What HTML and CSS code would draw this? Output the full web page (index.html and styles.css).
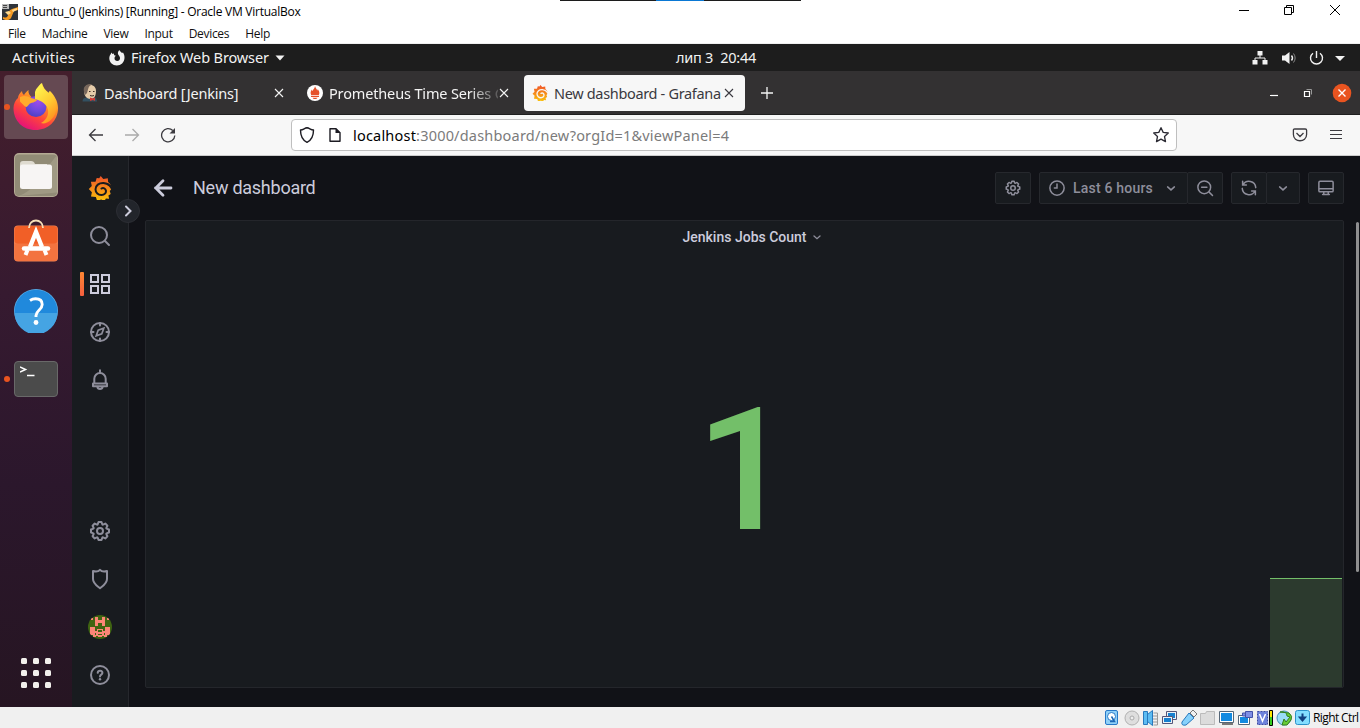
FILE: index.html
```html
<!DOCTYPE html>
<html lang="en">
<head>
<meta charset="utf-8">
<title>Ubuntu_0 (Jenkins) [Running] - Oracle VM VirtualBox</title>
<link rel="stylesheet" href="styles.css">
</head>
<body>
<svg class="defs" width="0" height="0">
  <defs>
    <linearGradient id="graf" x1="0" y1="0" x2="0" y2="1"><stop offset="0" stop-color="#f0522a"/><stop offset="1" stop-color="#fbc40a"/></linearGradient>
    <linearGradient id="fox" x1=".8" y1=".1" x2=".3" y2="1"><stop offset="0" stop-color="#ffd63a"/><stop offset=".35" stop-color="#ff9226"/><stop offset=".65" stop-color="#ff453b"/><stop offset="1" stop-color="#e3107b"/></linearGradient>
    <linearGradient id="flame" x1=".3" y1="0" x2=".8" y2="1"><stop offset="0" stop-color="#fff44f"/><stop offset=".5" stop-color="#ffcb32"/><stop offset="1" stop-color="#ff8a1d"/></linearGradient>
    <radialGradient id="globe" cx=".6" cy=".25" r=".8"><stop offset="0" stop-color="#a04bea"/><stop offset=".6" stop-color="#6a48dc"/><stop offset="1" stop-color="#4a3fc0"/></radialGradient>
    <symbol id="cog" viewBox="0 0 24 24"><path d="M21.32,9.55l-1.89-.63.89-1.78A1,1,0,0,0,20.13,6L18,3.87a1,1,0,0,0-1.15-.19l-1.78.89-.63-1.89A1,1,0,0,0,13.5,2h-3a1,1,0,0,0-.95.68L8.92,4.57,7.14,3.68A1,1,0,0,0,6,3.87L3.87,6a1,1,0,0,0-.19,1.15l.89,1.78-1.89.63A1,1,0,0,0,2,10.5v3a1,1,0,0,0,.68.95l1.89.63-.89,1.78A1,1,0,0,0,3.87,18L6,20.13a1,1,0,0,0,1.15.19l1.78-.89.63,1.89a1,1,0,0,0,.95.68h3a1,1,0,0,0,.95-.68l.63-1.89,1.78.89A1,1,0,0,0,18,20.13L20.13,18a1,1,0,0,0,.19-1.15l-.89-1.78,1.89-.63A1,1,0,0,0,22,13.5v-3A1,1,0,0,0,21.32,9.55ZM20,12.78l-1.2.4A2,2,0,0,0,17.64,16l.57,1.14-1.1,1.1L16,17.64a2,2,0,0,0-2.79,1.16l-.4,1.2H11.22l-.4-1.2A2,2,0,0,0,8,17.64l-1.14.57-1.1-1.1L6.36,16A2,2,0,0,0,5.2,13.18L4,12.78V11.22l1.2-.4A2,2,0,0,0,6.36,8L5.79,6.89l1.1-1.1L8,6.36A2,2,0,0,0,10.82,5.2l.4-1.2h1.56l.4,1.2A2,2,0,0,0,16,6.36l1.14-.57,1.1,1.1L17.64,8a2,2,0,0,0,1.16,2.79l1.2.4ZM12,8a4,4,0,1,0,4,4A4,4,0,0,0,12,8Zm0,6a2,2,0,1,1,2-2A2,2,0,0,1,12,14Z" fill="currentColor"/></symbol>
    <symbol id="chev" viewBox="0 0 24 24"><path d="M7.500 10.500l4.500 4 4.500-4" class="ln"/></symbol>
    <symbol id="cross" viewBox="0 0 12 12"><path d="M2 2l8 8M10 2l-8 8" fill="none" stroke="currentColor" stroke-width="1.1"/></symbol>
    <symbol id="gear-spiral" viewBox="0 0 24 24">
      <path fill="url(#graf)" d="M12.700 0l2.600 3 4.500-.8.3 3.800c2 1.600 3.500 4 3.800 6.800l-2.200 2.200 1 3-2.300 1.500.7 3.200-3.200-.1-1.500 2.400-3.200-1.500-4.100 1.300-1.200-3.700-4.900-.6.900-4.200-3.100-3.300 3-2.900-.9-4.400 4.600.1 1.200-3.800 2.500.3z"/>
      <path d="M25 15.500c-1.200-4.500-4.500-8.300-9.500-8.600-4.500-.2-8 2.600-8 6.400 0 3.600 2.800 5.900 6 5.800 3-.1 4.800-2.200 4.400-4.600-.4-2.100-2.600-3.100-4.400-2" fill="none" class="groove" stroke-width="2" stroke-linecap="round"/>
    </symbol>
  </defs>
</svg>

<div class="host">
  <header class="win">
    <span class="taskpeek"></span>
    <div class="title">
      <svg width="16" height="16" viewBox="0 0 16 16"><rect width="16" height="16" fill="#30343a"/><path d="M0 0h7v5H0z" fill="#b9b9b9"/><path d="M1 1.500h4M1 3.500h4" stroke="#444"/><path d="M1 13c5 2 5-2 6-5s3-3 9-5v3l-4 1-3 7c-2 3-6 2-8 1z" fill="#f59a23"/><path d="M3 8l4-1 2 2-3 2z" fill="#ffd98c"/><path d="M10 6l5-2v2l-4 2z" fill="#ffd98c"/></svg>
      <span class="cap">Ubuntu_0 (Jenkins) [Running] - Oracle VM VirtualBox</span>
    </div>
    <svg class="winctl" width="102" height="20" viewBox="0 0 102 20" fill="none" stroke="#000"><path d="M0 10.500h10M45.500 7.500h7v7h-7zM47.500 7.500v-2h7v7h-2M91 5l10 10M101 5l-10 10"/></svg>
  </header>
  <nav class="menu"><span>File</span><span>Machine</span><span>View</span><span>Input</span><span>Devices</span><span>Help</span></nav>

  <div class="top">
    <span class="act">Activities</span>
    <svg class="foxmono" width="16" height="16" viewBox="0 0 16 16"><path d="M1.500 4.500l1-2 1 1.500 1.500-.5C4.800 5 5 5.500 7 5.800 6 6.500 5.500 7 5.500 8.500c0 1.500 1.200 2.500 2.700 2.500 2 0 3-1.500 2.800-3.200C10.800 6 9.500 5.500 9 4 8.500 2.500 9.500 1 10.500 0c.3 1.500 1.500 1.800 2.500 3l1-.5c1 1.500 1.700 3.500 1.500 5.500-.2 4.500-3.500 7.500-7.700 7.500S.5 12.300.3 8.500c0-1.500.4-3 1.200-4z" fill="#f2f2f2"/></svg>
    <span class="app">Firefox Web Browser</span>
    <svg class="tri" width="10" height="6"><path d="M.5.5h9L5 5.500z" fill="#f2f2f2"/></svg>
    <span class="clock">лип 3&nbsp; 20:44</span>
    <svg class="tray" width="94" height="16" viewBox="0 0 94 16" fill="none" stroke="#f2f2f2">
      <path d="M5.500 1h5v4.500h-5zM.5 10h5v4.500h-5zM10.500 10h5v4.500h-5z" fill="#f2f2f2" stroke="none"/><path d="M8 5v3M3 10.500V8h10v2.500"/>
      <path d="M30 5.500h3L37.500 2v12L33 10.500h-3z" fill="#f2f2f2" stroke="none"/><path d="M39.500 5.500q2 2.500 0 5" stroke-width="1.400"/><path d="M41.500 3.500q3.300 4.500 0 9" stroke="#888"/>
      <path d="M61 3.200a6 6 0 1 0 7 0M64.500 1v7" stroke-width="1.400"/><path d="M83 6h10L88 11z" fill="#f2f2f2" stroke="none"/>
    </svg>
  </div>

  <div class="desktop">
    <aside class="dock">
      <div class="slot on"><i class="dot"></i>
        <svg width="46" height="48" viewBox="0 0 46 48"><path d="M5 15c0-3 2-5 4-7 0 2 1 3 2 4 1-2 3-4 4.500-5-.5 3 1 5 3 7l5 2V8c1-3 3-5 5.500-8 1 4 3 7 7 10l1-2c4 4 8 10 8 17 0 13-10 22-22.500 22S.5 38 .5 25c0-4 2-8 4.500-10z" fill="url(#fox)"/><circle cx="23" cy="23.500" r="10.500" fill="url(#globe)"/><path d="M22 9c1-4 4-6 6.500-9 1 4 3 7 7 10l1-2c7 7 8 15 6.500 20-2 9-10 14-15 12 6-3 9-10 6-16-3-5-8-7-12-8z" fill="url(#flame)"/><path d="M7 14c4-2 8-1 11 1l6 1.500c0 3-7 3-8 5-2 2-2 3-4 2l-5-5z" fill="#ffab2b"/></svg>
      </div>
      <div class="slot">
        <svg width="44" height="44" viewBox="0 0 44 44"><rect width="44" height="44" rx="5" fill="#b4aa94"/><rect x="1" y="1.500" width="42" height="41.500" rx="4" fill="#918b76"/><path d="M43 1.500v38L4 43c14-4 18-14 39-41z" fill="#a09a84"/><path d="M6 11q0-3 3-3h8q3 0 4 3l12 0v8H6z" fill="#dfdbd0"/><rect x="6" y="11.500" width="32" height="24.500" rx="2.500" fill="#f7f5f4"/></svg>
      </div>
      <div class="slot bag">
        <svg width="46" height="46" viewBox="0 0 46 46"><rect x="1" y="8.500" width="44" height="36" rx="4" fill="#f08354"/><rect x="1.500" y="9" width="43" height="18" rx="4" fill="#f15f27"/><path d="M1.500 26.500h43V41q0 3-3 3h-37q-3 0-3-3z" fill="#f3733f"/><path d="M16 11c0-10 14-10 14 0" fill="none" stroke="#f5dfb8" stroke-width="1.800"/><g fill="none" stroke="#fff"><path d="M17 30l6-15 6 15" stroke-width="4.400"/><path d="M11 31.500h24" stroke-width="4.500" stroke-linecap="round"/><path d="M14.500 33l-2 5M31.500 33l2 5" stroke-width="4"/></g></svg>
      </div>
      <div class="slot">
        <svg width="44" height="44" viewBox="0 0 44 44"><circle cx="22" cy="22" r="22" fill="#5aaee8"/><circle cx="22" cy="22" r="21.300" fill="#2089dc"/><path d="M.7 24h42.600a21.300 21.300 0 0 1-42.600 0z" fill="#45a4e3"/><path d="M16 11.500c1.500-1 3.500-1.700 5.500-1.700 4 0 6.700 2 6.700 5.700 0 5.500-6.200 6-6.200 11v1.500" fill="none" stroke="#fff" stroke-width="2.900"/><circle cx="22" cy="33.500" r="2.400" fill="#fff"/></svg>
      </div>
      <div class="slot"><i class="dot"></i>
        <div class="term"><svg width="18" height="12" viewBox="0 0 18 12"><path d="M0 1l5.500 2.500L0 6M7 9.500h7.500" fill="none" stroke="#fff" stroke-width="1.500"/></svg></div>
      </div>
      <div class="apps"><i></i><i></i><i></i><i></i><i></i><i></i><i></i><i></i><i></i></div>
    </aside>

    <main class="browser">
      <div class="tabs">
        <div class="tab t1">
          <svg width="16" height="18" viewBox="0 0 16 18"><path d="M.5 17.500q0-4 4.500-4l7-1q2.500 1 3 5z" fill="#335061"/><path d="M2 7C2-1.500 14-1 14 7c0 5-2 8-5.500 8S2 12 2 7z" fill="#e5cba9"/><path d="M3 11C-.5 3 4-.5 10 .5 6 2 6.500 5 5 9z" fill="#77675b"/><path d="M7 7.500h1.500M11 7.500h1.500M8 11.500q2 1 4 0" stroke="#3b2b25" fill="none"/><path d="M8 13.500l3 1 2-1v3.500l-2-1-3 1z" fill="#d33833"/></svg>
          <span class="tx">Dashboard [Jenkins]</span><svg class="x" width="12" height="12"><use href="#cross"/></svg>
        </div>
        <div class="tab t2">
          <svg width="16" height="16" viewBox="0 0 16 16"><circle cx="8" cy="8" r="8" fill="#fff"/><path d="M8 1c.3 2 2 3 2.200 4.500.5-.5.6-1 .6-1.500 1 1.500 1.800 3 1.500 4.500l-.5 1.500H4.200L3.700 8.500c-.3-1.500.5-3 1.300-4 0 .8.200 1.200.7 1.500C6 4 8 3.500 8 1zM4 10.800h8V12H4zM5.500 12.700h5c-.5 1.700-4.500 1.700-5 0z" fill="#e6522c"/></svg>
          <span class="tx fade">Prometheus Time Series C</span><svg class="x" width="12" height="12"><use href="#cross"/></svg>
        </div>
        <div class="tab t3">
          <svg width="16" height="16"><use href="#gear-spiral"/></svg>
          <span class="tx">New dashboard - Grafana</span><svg class="x" width="12" height="12"><use href="#cross"/></svg>
        </div>
        <svg class="plus" width="12" height="12" viewBox="0 0 12 12"><path d="M6 0v12M0 6h12" stroke="#f4f4f4" stroke-width="1.300"/></svg>
        <svg class="gtk" width="84" height="20" viewBox="0 0 84 20" fill="none" stroke="#fff"><path d="M1 12.500h8" stroke-width="1.200"/><path d="M37.500 6.500h5v5" stroke="#999"/><path d="M35.500 8.500h5v5h-5z" stroke-width="1.200"/><circle cx="73" cy="10" r="9.300" fill="#e95420" stroke="none"/><path d="M69.500 6.500l7 7M76.500 6.500l-7 7" stroke-width="1.400"/></svg>
      </div>

      <div class="bar">
        <svg class="nav" width="88" height="16" viewBox="0 0 88 16" fill="none" stroke="#3c3b40" stroke-width="1.300"><path d="M15 8H1.500M7.500 2L1.500 8l6 6"/><path d="M37 8h13.500M44.500 2l6 6-6 6" stroke="#ababab"/><path d="M86.800 8.500a6.600 6.600 0 1 1-2-5"/><path d="M87 1v5.500h-5.500z" fill="#3c3b40" stroke="none"/></svg>
        <div class="url">
          <svg width="44" height="18" viewBox="0 0 44 18" fill="none" stroke="#1c1b22" stroke-width="1.400"><path d="M8 1.700C5.500 2 4.500 3.800 1.500 4c0 6 1.500 10 6.500 12.300 5-2.300 6.500-6.300 6.500-12.300-3-.2-4-2-6.500-2.300z" stroke-linejoin="round"/><path d="M31 2.700h6l4 4v8.600h-10z" stroke-linejoin="round"/><path d="M36.500 2v5h5z" fill="#1c1b22" stroke="none"/></svg>
          <span class="addr"><b>localhost</b>:3000/dashboard/new?orgId=1&amp;viewPanel=4</span>
          <svg class="star" width="18" height="18" viewBox="0 0 18 18"><path d="M9 1.700l2.200 4.700 5.100.6-3.800 3.500 1 5.100L9 13.100l-4.500 2.500 1-5.100L1.700 7l5.100-.6z" fill="none" stroke="#2b2a33" stroke-width="1.300" stroke-linejoin="round"/></svg>
        </div>
        <svg class="ff" width="50" height="16" viewBox="0 0 50 16" fill="none" stroke="#3c3b40" stroke-width="1.300"><path d="M2.700 2h10.600q1.300 0 1.300 1.300V7.500c0 8.300-13.200 8.300-13.200 0V3.300Q1.400 2 2.700 2zM4.500 6L8 9.500 11.500 6"/><path d="M38 3.500h12M38 7.500h12M38 11.500h12" stroke-width="1.200"/></svg>
      </div>

      <div class="grafana">
        <nav class="side">
          <svg class="logo" width="24" height="24"><use href="#gear-spiral"/></svg>
          <svg width="24" height="24"><g class="ln"><circle cx="11" cy="11" r="8"/><path d="M17 17l4 4"/></g></svg>
          <div class="active"><svg width="24" height="24"><path class="ln" d="M3 3h7v7H3zM14 3h7v7h-7zM3 14h7v7H3zM14 14h7v7h-7z"/></svg></div>
          <svg width="24" height="24"><g class="ln"><circle cx="12" cy="12" r="9"/><path d="M15.800 8.200l-2 5.600-5.600 2 2-5.600z" stroke-width="1.700"/><path d="M12 3v2.500M12 18.500V21M3 12h2.500M18.500 12H21"/></g></svg>
          <svg width="24" height="24"><g class="ln" stroke-linejoin="round"><path d="M12 2.200V5M6.300 14.500V10.700a5.700 5.700 0 0 1 11.400 0v3.800M5 15.500h14v2.800H5zM9.300 18.500c.5 3.300 4.900 3.300 5.400 0"/></g></svg>
          <span class="sp"></span>
          <svg width="24" height="24"><use href="#cog"/></svg>
          <svg width="24" height="24"><path class="ln" stroke-linejoin="round" d="M12 2.800C10.500 4.500 7.500 4.800 5 4v8c0 4.500 3.500 6.500 7 9.200 3.500-2.700 7-4.700 7-9.200V4c-2.500.8-5.500.5-7-1.200z"/></svg>
          <svg class="avatar" width="24" height="24" shape-rendering="crispEdges"><path d="M0 0h24v24H0z" fill="#3f6412"/><path d="M3 3h2v2H3zM19 3h2v2h-2zM7 2h3v3h4V2h3v9h-3V8h-4v3H7zM2 12h5v2h10v-2h5v8h-3v2h-3v-1h-2v1h-4v-1H8v1H5v-2H2z" fill="#fb8677"/><path d="M10 15h4v2h-4zM10 19h4v1h-4zM7 14h2v2H7zM15 14h2v2h-2zM7 18h1v2H7zM16 18h1v2h-1z" fill="#3f6412"/></svg>
          <svg width="24" height="24"><g class="ln"><circle cx="12" cy="12" r="9"/><path d="M9.700 9.800c.4-2.800 4.700-2.500 4.700.2 0 1.700-2.400 1.600-2.400 3.500"/></g><circle cx="12" cy="16.300" r="1.200" fill="currentColor"/></svg>
          <span class="expand"><svg width="24" height="24" viewBox="0 0 24 24"><path d="M10 7.500l4.500 4.500-4.500 4.500" class="ln"/></svg></span>
        </nav>
        <section class="page">
          <div class="head">
            <svg width="24" height="24" viewBox="0 0 24 24"><path d="M20 12H4.500M12 4.800L4.800 12l7.200 7.200" fill="none" stroke="#ccccdc" stroke-width="2.800" stroke-linecap="round"/></svg>
            <h1>New dashboard</h1>
            <div class="btn"><svg width="18" height="18"><use href="#cog"/></svg></div>
            <div class="btn time"><svg width="18" height="18" viewBox="0 0 24 24"><g class="ln"><circle cx="12" cy="12" r="9.500"/><path d="M12 6.500V12H8.500"/></g></svg><span>Last 6 hours</span><svg width="18" height="18"><use href="#chev"/></svg></div>
            <div class="btn join"><svg width="18" height="18" viewBox="0 0 24 24"><g class="ln"><circle cx="11" cy="11" r="8.500"/><path d="M17.500 17.500l4.500 4.500M7.500 11h7"/></g></svg></div>
            <div class="btn"><svg width="18" height="18" viewBox="0 0 24 24"><path class="ln" d="M3.500 3v5h5M4 8a9 9 0 0 1 17 3.500M20.500 21v-5h-5M20 16A9 9 0 0 1 3 12.500"/></svg></div>
            <div class="btn join small"><svg width="18" height="18"><use href="#chev"/></svg></div>
            <div class="btn"><svg width="18" height="18" viewBox="0 0 24 24"><path class="ln" stroke-linejoin="round" d="M4 3h16q1.500 0 1.500 1.500v11q0 1.500-1.500 1.500H4q-1.500 0-1.500-1.500v-11Q2.500 3 4 3zM2.500 13h19M9 17v2.500M15 17v2.500M7.500 20.500h9"/></svg></div>
          </div>
          <article class="panel">
            <h2>Jenkins Jobs Count<svg width="16" height="16"><use href="#chev"/></svg></h2>
            <div class="value">1</div>
            <div class="spark"></div>
          </article>
          <i class="thumb"></i>
        </section>
      </div>
    </main>
  </div>

  <footer class="status">
    <svg width="206" height="18" viewBox="0 0 206 18">
      <g stroke-width="1">
        <rect x="1.500" y="1.500" width="12" height="14" rx="1.500" fill="#8fd0f8" stroke="#2778c8"/><circle cx="7.500" cy="7.500" r="4" fill="#fff" stroke="#2778c8"/><path d="M7.500 7.500l3 5H6" fill="none" stroke="#1b67b5" stroke-width="1.500"/>
        <circle cx="28" cy="9" r="7" fill="#dedede" stroke="#b1b1b1"/><circle cx="28" cy="9" r="2" fill="#eee" stroke="#aaa"/>
        <path d="M39.500 2.500h4v13h-4zM43.500 5.500l5-4v15l-5-4z" fill="#5cbcf2" stroke="#2779bd"/><path d="M49.500 4h4v12h-4M49 7h4M49 10h4M49 13h4" fill="none" stroke="#9a9a9a"/>
        <path d="M62.500 2.500h10v8h-10z" fill="#e9f2f8" stroke="#557"/><path d="M64 4h7v5h-7z" fill="#1680d0"/><path d="M58.500 7.500h10v7h-10z" fill="#e9f2f8" stroke="#557"/><path d="M60 9h7v4h-7z" fill="#1680d0"/>
        <path d="M78 13l7-9 5 5-8 7q-5 1-4-3z" fill="#86d1fb" stroke="#2778bd"/><path d="M86 4l3-3 4 4-3 3z" fill="#f1f1f1" stroke="#777"/>
        <path d="M96.500 4.500h5l1-2h8v13h-14z" fill="#dcdcdc" stroke="#bbb"/>
        <path d="M115.500 2.500h14v11h-14z" fill="#fff" stroke="#567"/><path d="M117 4h11v8h-11z" fill="#138ae0"/><path d="M118 15h11" stroke="#777" stroke-width="2"/>
        <path d="M134.500 6.500h11v9h-11z" fill="#fff" stroke="#567"/><path d="M136 8h8v6h-8z" fill="#138ae0"/><path d="M141.500 2.500h7v6h-7zM138.500 4h3v3h-3z" fill="#7e8ee4" stroke="#4250a8"/>
        <rect x="153.500" y="2.500" width="10" height="13" fill="#6e82db" stroke="#3d4ba5" stroke-dasharray="2 1"/><path d="M155.500 5l3 7 3-7" fill="none" stroke="#fff" stroke-width="1.500"/><path d="M165.500 1.500h3v15h-3z" fill="#ffe600" stroke="#000"/><path d="M166 8h2v8h-2z" fill="#34ce20"/>
        <circle cx="180" cy="9" r="7" fill="#9adcf5" stroke="#428fb8"/><path d="M176 3q7-1 7 4l3 1-4 5-2-3-2 6h5l4-5q2-4-2-7z" fill="#68cc36" stroke="#347f1d"/>
        <rect x="191.500" y="1.500" width="14" height="14" rx="2" fill="#83ddff" stroke="#2b91c9"/><path d="M198.500 4.500v5M196 8.500l2.500 3 2.500-3z" fill="#113f80" stroke="#113f80" stroke-width="2"/>
      </g>
    </svg>
    <span>Right Ctrl</span>
  </footer>
</div>
</body>
</html>
```
FILE: styles.css
```css
* { box-sizing: border-box; }
body { margin: 0; background: #fff; }
.defs { position: absolute; }
svg { display: block; flex: none; }
h1, h2 { margin: 0; font-weight: 400; }
.host { width: 1360px; height: 728px; display: flex; flex-direction: column; overflow: hidden; position: relative; font-family: "Noto Sans", sans-serif; white-space: nowrap; }
.ln { fill: none; stroke: currentColor; stroke-width: 2; stroke-linecap: round; }
.groove { stroke: var(--groove); }

/* host window */
.win { height: 24px; display: flex; align-items: center; justify-content: space-between; padding: 0 19px 4px 2px; background: #fff; position: relative; font: 12px "Open Sans", sans-serif; }
.taskpeek { position: absolute; left: 560px; top: 0; width: 241px; height: 1px; background: linear-gradient(90deg, #1c1c1c 96px, #0a78d4 96px, #0a78d4 144px, #1c1c1c 144px); }
.title { display: flex; align-items: center; gap: 5px; padding-top: 3px; }
.cap { letter-spacing: -0.25px; }
.menu { height: 20px; display: flex; gap: 16px; padding-left: 8px; border-bottom: 1px solid #efefef; font: 12px/20px "Open Sans", sans-serif; color: #111; letter-spacing: -0.3px; }

/* guest top bar */
.top { height: 27px; background: #1d1d1d; color: #f2f2f2; display: flex; align-items: center; padding-left: 12px; position: relative; font-size: 14.5px; line-height: 27px; }
.act { letter-spacing: 0.25px; }
.foxmono { margin-left: 34px; }
.app { margin-left: 6px; letter-spacing: -0.12px; }
.tri { margin-left: 6px; }
.clock { position: absolute; left: 676px; top: 0; letter-spacing: -0.25px; }
.tray { margin-left: auto; margin-right: 14px; }

.desktop { height: 636px; display: flex; }
.dock { width: 72px; display: flex; flex-direction: column; align-items: center; gap: 4px; padding: 4px 0 19px; background: linear-gradient(#441e2c, #361a30 35%, #2b172c 65%, #261522); }
.slot { width: 64px; height: 64px; display: flex; align-items: center; justify-content: center; border-radius: 4px; position: relative; }
.slot.on { background: #654952; }
.slot.bag { padding-bottom: 6px; }
.dot { position: absolute; left: 0; top: 29px; width: 6px; height: 6px; border-radius: 50%; background: #e95420; }
.term { width: 44px; height: 36px; border-radius: 4px; background: #4b4b4b; border: 1px solid #696969; padding: 4px 5px; }
.apps { margin-top: auto; display: grid; grid-template-columns: repeat(3, 6px); gap: 6px; }
.apps i { height: 6px; border-radius: 1.5px; background: #f2f0ec; }

/* browser chrome */
.browser { width: 1288px; display: flex; flex-direction: column; }
.tabs { height: 44px; background: #333132; border-bottom: 1px solid #1f1f1f; display: flex; align-items: center; padding: 0 7px 0 0; color: #f4f4f4; font-size: 14.5px; }
.tab { height: 36px; display: flex; align-items: center; letter-spacing: -0.2px; }
.t1 { width: 226px; padding: 0 13px 0 10px; gap: 6px; }
.t2 { width: 226px; padding: 0 14px 0 9px; gap: 6px; letter-spacing: -0.15px; }
.t3 { width: 221px; padding: 0 10px 0 8px; gap: 6px; background: #f7f7f7; color: #3a3940; border-radius: 4px; --groove: #f7f7f7; letter-spacing: -0.33px; }
.tx { flex: 1; min-width: 0; }
.t2 .x, .t3 .x { margin-left: -6px; }
.fade { -webkit-mask-image: linear-gradient(90deg, #000 140px, transparent 176px); mask-image: linear-gradient(90deg, #000 140px, transparent 176px); }
.plus { margin-left: 16px; }
.gtk { margin-left: auto; }
.bar { height: 41px; background: #f7f7f7; border-bottom: 1px solid #ccc; display: flex; align-items: center; padding: 0 18px 0 16px; }
.url { margin-left: 115px; width: 886px; height: 32px; border: 1px solid #bfbfbf; border-radius: 4px; background: #fff; display: flex; align-items: center; padding: 0 6px 0 7px; }
.addr { margin-left: 10px; font-size: 14.5px; color: #7b7b7b; letter-spacing: 0.2px; }
.addr b { font-weight: 400; color: #000; }
.star { margin-left: auto; }
.ff { margin-left: auto; }

/* dashboard */
.grafana { height: 551px; display: flex; background: #111217; font-family: Roboto, sans-serif; }
.side { width: 57px; background: #181b1f; border-right: 1px solid #26282d; display: flex; flex-direction: column; align-items: center; gap: 24px; padding: 20px 0; color: #8e8e9b; position: relative; --groove: #181b1f; }
.side .sp { flex: 1; margin-bottom: -24px; }
.active { color: #ccccdc; position: relative; }
.active::before { content: ""; position: absolute; left: -8px; top: 0; width: 4px; height: 24px; border-radius: 1px; background: linear-gradient(#ff8833, #f55f3e); }
.avatar { border-radius: 50%; }
.expand { position: absolute; left: 44px; top: 43px; width: 24px; height: 24px; border-radius: 50%; background: #22252b; border: 1px solid #2c2e34; color: #ccccdc; display: flex; align-items: center; justify-content: center; }
.page { flex: 1; position: relative; padding: 16px 16px 0; }
.head { height: 32px; display: flex; align-items: center; padding-left: 6px; }
.head h1 { font-size: 18px; line-height: 32px; color: #ccccdc; margin: 0 auto 0 18px; letter-spacing: -0.25px; }
.btn { width: 36px; height: 32px; border: 1px solid #26282d; border-radius: 2px; background: #181b1f; color: #8e8e9b; display: flex; align-items: center; justify-content: center; margin-left: 8px; }
.btn.join { margin-left: -1px; }
.btn.small { width: 34px; }
.time { width: 149px; font-size: 14px; font-weight: 500; justify-content: flex-start; padding: 0 7px 0 8px; letter-spacing: 0.2px; }
.time span { margin: 0 auto 0 7px; }
.panel { margin-top: 16px; width: 1199px; height: 468px; background: #181b1f; border: 1px solid #24262b; border-radius: 2px; position: relative; color: #ccccdc; }
.panel h2 { display: flex; justify-content: center; align-items: center; height: 32px; font-size: 14px; font-weight: 500; gap: 2px; padding-left: 18px; }
.panel h2 svg { color: #8e8e9b; }
.value { font-size: 171px; line-height: 435px; font-weight: 500; color: #73bf69; text-align: center; }
.spark { position: absolute; right: 1px; bottom: 0; width: 72px; height: 109px; background: #2c3a2e; border-top: 1px solid #73bf69; }
.thumb { position: absolute; right: 1px; top: 66px; width: 3px; height: 350px; border-radius: 2px; background: #8f8f90; }

.status { height: 21px; background: #f0f0f0; display: flex; align-items: center; gap: 3px; padding-left: 1104px; font: 12px "Open Sans", sans-serif; color: #000; letter-spacing: -0.6px; }
```
